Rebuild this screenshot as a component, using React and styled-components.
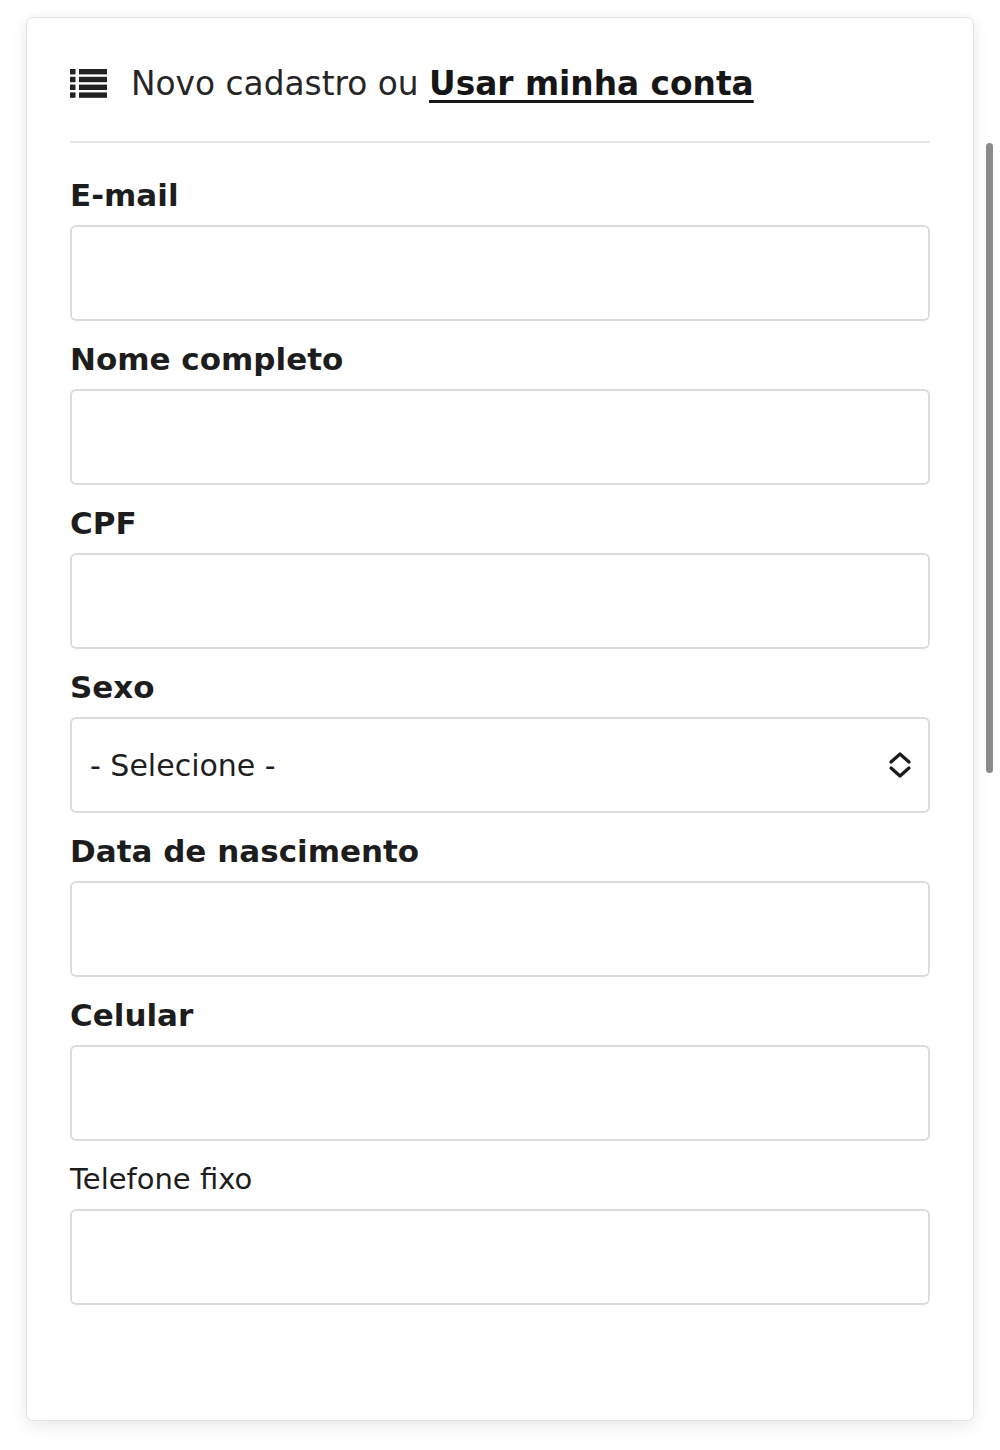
import React from "react";
import styled, { createGlobalStyle } from "styled-components";

const Global = createGlobalStyle`
  html, body { margin: 0; padding: 0; background: #ffffff; }
  body { font-family: "DejaVu Sans", "Liberation Sans", sans-serif; color: #1f1f1f; }
  * { box-sizing: border-box; }
`;

const Page = styled.div`
  position: relative;
  width: 1000px;
  height: 1450px;
  padding: 17px 26px 0 26px;
`;

const Card = styled.div`
  width: 948px;
  height: 1404px;
  background: #ffffff;
  border: 1.5px solid #e2e2e2;
  border-radius: 7px;
  box-shadow: 0 6px 18px rgba(0, 0, 0, 0.07), 0 0 10px rgba(0, 0, 0, 0.04);
  padding: 0 43px;
`;

const Header = styled.div`
  display: flex;
  align-items: center;
  gap: 24px;
  height: 125px;
  padding-top: 8px;
  border-bottom: 2px solid #e6e6e6;
`;

const HeaderText = styled.div`
  font-family: "DejaVu Sans", sans-serif;
  font-size: 32.8px;
  color: #262626;
  white-space: nowrap;
`;

const AccountLink = styled.a`
  font-weight: 700;
  color: #161616;
  text-decoration: underline;
  text-decoration-thickness: 3px;
  text-underline-offset: 5px;
  cursor: pointer;
`;

const Form = styled.form`
  display: flex;
  flex-direction: column;
  padding-top: 14px;
`;

const Field = styled.div`
  display: flex;
  flex-direction: column;
  padding-top: 18px;
`;

const Label = styled.label`
  font-family: "DejaVu Sans", sans-serif;
  font-weight: ${(p) => (p.$light ? 400 : 700)};
  font-size: ${(p) => (p.$light ? "29px" : "31px")};
  line-height: 41px;
  height: 41px;
  margin-bottom: 9px;
  color: #1d1d1d;
`;

const Input = styled.input`
  width: 100%;
  height: 96px;
  border: 2px solid #dcdcdc;
  border-radius: 6px;
  background: #fff;
  padding: 0 18px;
  font-size: 30px;
  outline: none;
`;

const SelectWrap = styled.div`
  position: relative;
  width: 100%;
  height: 96px;
`;

const Select = styled.select`
  width: 100%;
  height: 96px;
  appearance: none;
  -webkit-appearance: none;
  border: 2px solid #dcdcdc;
  border-radius: 6px;
  background: #fff;
  padding: 0 18px;
  font-family: "DejaVu Sans", sans-serif;
  font-size: 30px;
  color: #1f1f1f;
  outline: none;
`;

const Chevron = styled.svg`
  position: absolute;
  right: 18px;
  top: 50%;
  transform: translateY(-50%);
  pointer-events: none;
`;

const Scrollbar = styled.div`
  position: absolute;
  left: 986px;
  top: 143px;
  width: 7px;
  height: 630px;
  border-radius: 4px;
  background: #8a8a8a;
`;

const ListIcon = () => (
  <svg width="37" height="29" viewBox="0 0 37 29">
    {[0, 7.8, 15.6, 23.4].map((y) => (
      <g key={y} fill="#222">
        <rect x="0" y={y} width="5.5" height="5.4" />
        <rect x="9" y={y} width="28" height="5.4" />
      </g>
    ))}
  </svg>
);

const fields = [
  { label: "E-mail", type: "email" },
  { label: "Nome completo", type: "text" },
  { label: "CPF", type: "text" },
  { label: "Sexo", select: true },
  { label: "Data de nascimento", type: "text" },
  { label: "Celular", type: "tel" },
  { label: "Telefone fixo", type: "tel", light: true },
];

export default function App() {
  return (
    <>
      <Global />
      <Page>
        <Card>
          <Header>
            <ListIcon />
            <HeaderText>
              Novo cadastro ou <AccountLink>Usar minha conta</AccountLink>
            </HeaderText>
          </Header>
          <Form onSubmit={(e) => e.preventDefault()}>
            {fields.map((f) => (
              <Field key={f.label}>
                <Label $light={f.light}>{f.label}</Label>
                {f.select ? (
                  <SelectWrap>
                    <Select defaultValue="">
                      <option value="">- Selecione -</option>
                      <option value="M">Masculino</option>
                      <option value="F">Feminino</option>
                    </Select>
                    <Chevron width="24" height="28" viewBox="0 0 24 28">
                      <path d="M3 11 L12 3 L21 11" fill="none" stroke="#1a1a1a" strokeWidth="3.2" strokeLinecap="round" strokeLinejoin="round" />
                      <path d="M3 17 L12 25 L21 17" fill="none" stroke="#1a1a1a" strokeWidth="3.2" strokeLinecap="round" strokeLinejoin="round" />
                    </Chevron>
                  </SelectWrap>
                ) : (
                  <Input type={f.type} />
                )}
              </Field>
            ))}
          </Form>
        </Card>
        <Scrollbar />
      </Page>
    </>
  );
}
